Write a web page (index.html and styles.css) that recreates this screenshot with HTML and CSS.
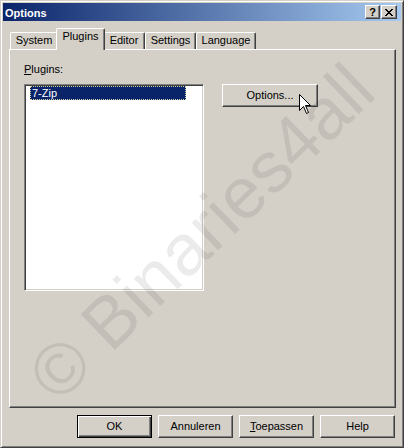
FILE: index.html
```html
<!DOCTYPE html>
<html>
<head>
<meta charset="utf-8">
<title>Options</title>
<link rel="stylesheet" href="styles.css">
</head>
<body>
<div class="window">
  <div class="titlebar">
    <span class="title">Options</span>
    <div class="tbtns">
      <span class="tbtn help">?</span>
      <span class="tbtn close"><svg width="8" height="7" viewBox="0 0 8 7" shape-rendering="crispEdges"><path d="M0 0h2v1H0z M6 0h2v1H6z M1 1h2v1H1z M5 1h2v1H5z M2 2h4v1H2z M3 3h2v1H3z M2 4h4v1H2z M1 5h2v1H1z M5 5h2v1H5z M0 6h2v1H0z M6 6h2v1H6z" fill="#000"/></svg></span>
    </div>
  </div>
  <div class="tabs">
    <div class="tab t-system">System</div>
    <div class="tab t-plugins active">Plugins</div>
    <div class="tab t-editor">Editor</div>
    <div class="tab t-settings">Settings</div>
    <div class="tab t-language">Language</div>
  </div>
  <div class="panel">
    <div class="label"><u>P</u>lugins:</div>
    <div class="row">
      <div class="listbox"><div class="item">7-Zip</div></div>
      <button class="btn opt">Options...</button>
    </div>
  </div>
  <div class="actions">
    <button class="btn default">OK</button>
    <button class="btn">Annuleren</button>
    <button class="btn"><u>T</u>oepassen</button>
    <button class="btn">Help</button>
  </div>
  <div class="watermark">© Binaries4all</div>
  <svg class="cursor" width="13" height="21" viewBox="0 0 13 21"><path d="M0.5 0.5 L0.5 16.5 L4.5 12.5 L7.5 19.5 L9.5 18.5 L6.5 11.5 L11.5 11.5 Z" fill="#fff" stroke="#000" stroke-width="1" stroke-linejoin="miter"/></svg>
</div>
</body>
</html>
```
FILE: styles.css
```css
body {
  margin: 0;
  font-family: "Liberation Sans", Arial, sans-serif;
  font-size: 11px;
  color: #000;
}

.window {
  position: relative;
  width: 404px;
  height: 448px;
  box-sizing: border-box;
  background: #d4d0c8;
  border: 1px solid;
  border-color: #d4d0c8 #404040 #404040 #d4d0c8;
  box-shadow: inset 1px 1px #fff, inset -1px -1px #808080;
  padding: 2px;
  overflow: hidden;
  display: flex;
  flex-direction: column;
}

.titlebar {
  height: 18px;
  flex: none;
  display: flex;
  align-items: flex-start;
  justify-content: space-between;
  padding: 0 4px 0 2px;
  background: linear-gradient(to right, #0a246a, #a6caf0);
}

.title {
  color: #fff;
  font-weight: bold;
  line-height: 13px;
  padding-top: 4px;
}

.tbtns {
  display: flex;
  gap: 1px;
  margin-top: 2px;
}

.tbtn {
  width: 16px;
  height: 14px;
  box-sizing: border-box;
  background: #d4d0c8;
  border: 1px solid;
  border-color: #fff #404040 #404040 #fff;
  box-shadow: inset -1px -1px #808080;
  display: flex;
  align-items: center;
  justify-content: center;
  font-weight: bold;
  font-size: 11px;
  line-height: 12px;
}

.tbtn.help {
  width: 15px;
}

.tabs {
  flex: none;
  display: flex;
  align-items: flex-end;
  height: 21px;
  margin: 7px 0 0 7px;
}

.tab {
  height: 17px;
  box-sizing: border-box;
  border-top: 1px solid #fff;
  border-left: 1px solid #fff;
  border-right: 1px solid #404040;
  box-shadow: inset -1px 0 #808080;
  border-radius: 2px 2px 0 0;
  background: #d4d0c8;
  text-align: center;
  padding-top: 1px;
  line-height: 13px;
}

.tab.active {
  position: relative;
  z-index: 1;
  height: 22px;
  margin: 0 -2px -1px;
}

.t-system { width: 48px; }
.t-plugins { width: 49px; }
.t-editor { width: 42px; }
.t-settings { width: 51px; }
.t-language { width: 60px; }

.panel {
  flex: none;
  margin: 0 5px 0 6px;
  height: 359px;
  box-sizing: border-box;
  border: 1px solid;
  border-color: #fff #404040 #404040 #fff;
  box-shadow: inset -1px -1px #808080;
  padding: 13px 0 0 14px;
}

.label {
  line-height: 13px;
}

.row {
  display: flex;
  align-items: flex-start;
  gap: 18px;
  margin-top: 8px;
}

.listbox {
  width: 180px;
  height: 207px;
  box-sizing: border-box;
  background: #fff;
  border: 1px solid;
  border-color: #808080 #fff #fff #808080;
  box-shadow: inset 1px 1px #404040, inset -1px -1px #d4d0c8;
  padding: 1px 0 0 5px;
}

.item {
  width: 156px;
  height: 14px;
  box-sizing: border-box;
  background: #0a246a;
  color: #fff;
  outline: 1px dotted #d8d0a0;
  outline-offset: -1px;
  line-height: 14px;
  padding-left: 2px;
}

.btn {
  font-family: inherit;
  font-size: 11px;
  color: #000;
  background: #d4d0c8;
  border: 1px solid;
  border-color: #fff #404040 #404040 #fff;
  box-shadow: inset -1px -1px #808080;
  padding: 0;
  margin: 0;
  box-sizing: border-box;
  line-height: 13px;
}

.opt {
  width: 96px;
  height: 23px;
}

.actions {
  flex: none;
  display: flex;
  justify-content: flex-end;
  gap: 6px;
  margin: 7px 6px 0 0;
}

.actions .btn {
  width: 75px;
  height: 23px;
}

.actions .btn.default {
  border: 1px solid #000;
  box-shadow: inset 1px 1px #fff, inset -1px -1px #404040, inset -2px -2px #808080;
}

.watermark {
  position: absolute;
  left: 200px;
  top: 231px;
  transform: translate(-50%, -50%) rotate(-44deg);
  font-size: 72px;
  line-height: 1;
  white-space: nowrap;
  color: rgba(0, 0, 0, 0.08);
  pointer-events: none;
}

.cursor {
  position: absolute;
  left: 298px;
  top: 93px;
}
```
